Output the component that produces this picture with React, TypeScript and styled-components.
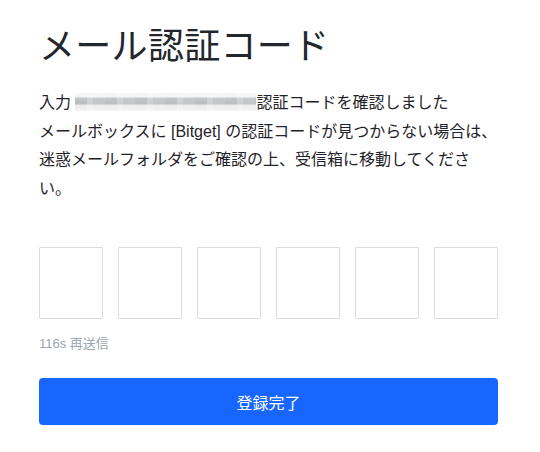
import React, { useState } from "react";
import styled, { createGlobalStyle } from "styled-components";

const GlobalStyle = createGlobalStyle`
  html, body {
    margin: 0;
    padding: 0;
    background: #fff;
  }
  body {
    font-family: "Noto Sans", "Noto Sans CJK JP", sans-serif;
    color: #1f2329;
  }
`;

const Page = styled.div`
  width: 540px;
  height: 452px;
  box-sizing: border-box;
  padding: 15px 42px 0 39px;
  display: flex;
  flex-direction: column;
`;

const Title = styled.h1`
  margin: 0;
  font-family: "Noto Sans CJK JP", sans-serif;
  font-size: 36px;
  font-weight: 400;
  line-height: 56px;
  letter-spacing: 0.3px;
  color: #23262b;
`;

const Description = styled.p`
  margin: 18px 0 0;
  font-family: "Liberation Sans", "Noto Sans CJK JP", sans-serif;
  font-size: 16px;
  line-height: 28.5px;
  color: #1f2329;
  white-space: nowrap;
`;

// mosaic-blurred email address
const MaskedEmail = styled.span`
  display: inline-block;
  width: 181px;
  height: 18px;
  vertical-align: -3px;
  background:
    repeating-linear-gradient(
      90deg,
      rgba(255, 255, 255, 0) 0px,
      rgba(255, 255, 255, 0) 12px,
      rgba(255, 255, 255, 0.25) 12px,
      rgba(255, 255, 255, 0.25) 18px,
      rgba(255, 255, 255, 0.1) 18px,
      rgba(255, 255, 255, 0.1) 30px
    ),
    linear-gradient(
      180deg,
      #f5f5f6 0%,
      #f5f5f6 24%,
      #c4c5c9 26%,
      #bcbdc1 62%,
      #ebebed 66%,
      #f3f3f4 100%
    );
`;

const CodeRow = styled.div`
  margin-top: 44px;
  display: grid;
  grid-template-columns: repeat(6, 64px);
  justify-content: space-between;
`;

const CodeBox = styled.input`
  width: 64px;
  height: 72px;
  box-sizing: border-box;
  border: 1px solid #dcdcdc;
  border-radius: 1px;
  padding: 0;
  font-size: 28px;
  text-align: center;
  color: #1f2329;
  background: #fff;
  outline: none;
  &:focus {
    border-color: #1766ff;
  }
`;

const Resend = styled.div`
  margin-top: 16px;
  font-family: "Liberation Sans", "Noto Sans CJK JP", sans-serif;
  font-size: 13px;
  line-height: 18px;
  color: #9ea6b3;
`;

const SubmitButton = styled.button`
  margin-top: 25px;
  width: 459px;
  height: 47px;
  border: none;
  border-radius: 4px;
  background: #1766ff;
  color: #fff;
  font-family: "Noto Sans CJK JP", sans-serif;
  font-size: 16px;
  cursor: pointer;
`;

const lines = [
  "メールボックスに [Bitget] の認証コードが見つからない場合は、",
  "迷惑メールフォルダをご確認の上、受信箱に移動してくださ",
  "い。",
];

export default function App() {
  const [code, setCode] = useState(["", "", "", "", "", ""]);

  const handleChange = (index: number, value: string) => {
    const next = [...code];
    next[index] = value.slice(-1);
    setCode(next);
  };

  return (
    <>
      <GlobalStyle />
      <Page>
        <Title>メール認証コード</Title>
        <Description>
          入力 <MaskedEmail />認証コードを確認しました
          {lines.map((line) => (
            <React.Fragment key={line}>
              <br />
              {line}
            </React.Fragment>
          ))}
        </Description>
        <CodeRow>
          {code.map((digit, i) => (
            <CodeBox
              key={i}
              value={digit}
              maxLength={1}
              onChange={(e) => handleChange(i, e.target.value)}
            />
          ))}
        </CodeRow>
        <Resend>116s 再送信</Resend>
        <SubmitButton>登録完了</SubmitButton>
      </Page>
    </>
  );
}
